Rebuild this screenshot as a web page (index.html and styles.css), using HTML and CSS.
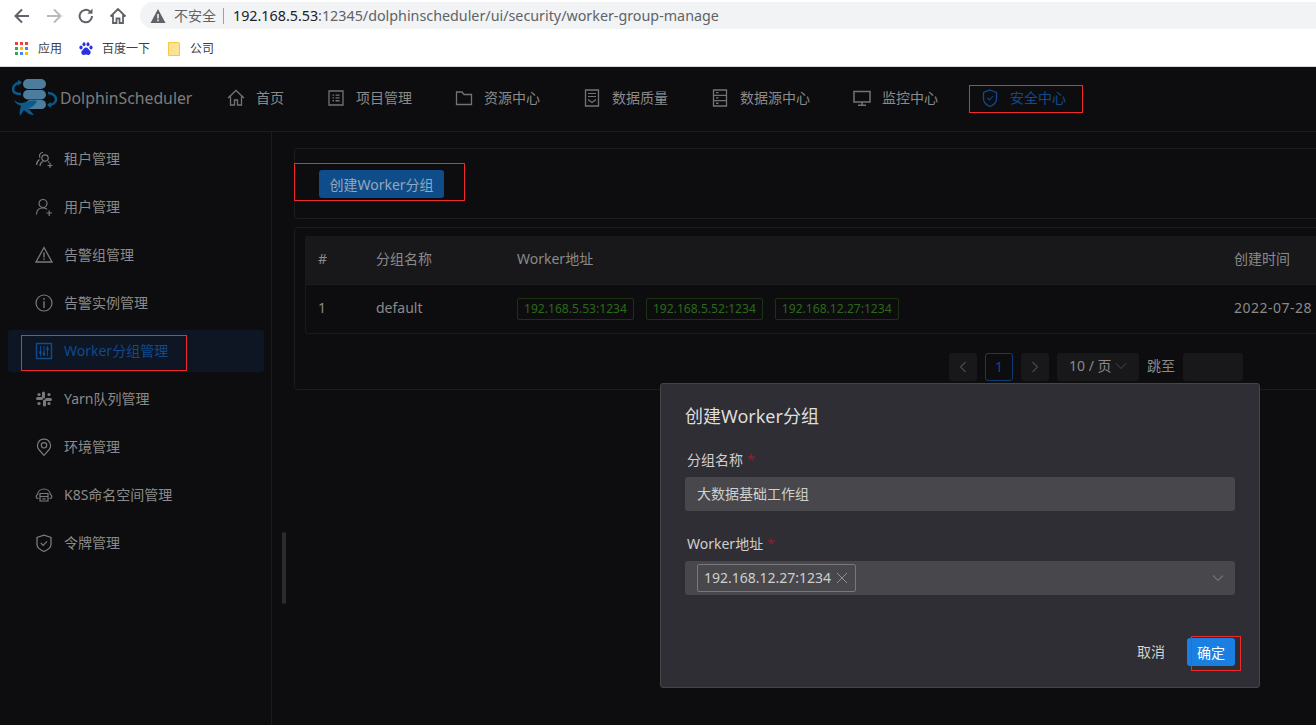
FILE: index.html
```html
<!DOCTYPE html>
<html lang="zh">
<head>
  <meta charset="UTF-8">
  <title>DolphinScheduler</title>
  <link rel="stylesheet" href="styles.css">
</head>
<body>

<div class="browser-bar">
  <svg class="tool-icon" viewBox="0 0 20 20"><path d="M17 10H4M10 3.5 3.5 10l6.5 6.5" fill="none" stroke="#5f6368" stroke-width="2"/></svg>
  <svg class="tool-icon" viewBox="0 0 20 20"><path d="M3 10h13M10 3.5l6.5 6.5-6.5 6.5" fill="none" stroke="#b8babd" stroke-width="2"/></svg>
  <svg class="tool-icon" viewBox="0 0 20 20"><path d="M16 10a6.2 6.2 0 1 1-1.9-4.4" fill="none" stroke="#5f6368" stroke-width="2"/><path d="M16.5 2.5v5.2h-5.2z" fill="#5f6368"/></svg>
  <svg class="tool-icon" viewBox="0 0 20 20"><path d="M2.5 10.5 10 3l7.5 7.5M5 9v8h3.5v-4.5h3V17H15V9" fill="none" stroke="#5f6368" stroke-width="1.8"/></svg>
  <div class="address">
    <svg class="warn-icon" viewBox="0 0 16 16"><path d="M8 1 15.500 15H.5z" fill="#5f6368"/><path d="M7.200 6h1.600v4.600H7.200zM7.200 11.600h1.600v1.600H7.200z" fill="#f1f3f4"/></svg>
    <span class="not-safe">不安全</span>
    <span class="url"><b>192.168.5.53</b>:12345/dolphinscheduler/ui/security/worker-group-manage</span>
  </div>
</div>

<div class="bookmarks">
  <div class="bookmark apps">
    <svg class="mark-icon" viewBox="0 0 13 13">
      <path d="M0 0h3v3H0z" fill="#ea4335"/><path d="M5 0h3v3H5z" fill="#ea4335"/><path d="M10 0h3v3h-3z" fill="#ea4335"/>
      <path d="M0 5h3v3H0z" fill="#34a853"/><path d="M5 5h3v3H5z" fill="#fbbc04"/><path d="M10 5h3v3h-3z" fill="#4285f4"/>
      <path d="M0 10h3v3H0z" fill="#34a853"/><path d="M5 10h3v3H5z" fill="#4285f4"/><path d="M10 10h3v3h-3z" fill="#fbbc04"/>
    </svg>
    应用
  </div>
  <div class="bookmark baidu">
    <svg class="mark-icon" viewBox="0 0 14 14" fill="#2932e1"><ellipse cx="2" cy="5.500" rx="1.600" ry="2"/><ellipse cx="5" cy="2.200" rx="1.500" ry="2"/><ellipse cx="9" cy="2.200" rx="1.500" ry="2"/><ellipse cx="12" cy="5.500" rx="1.600" ry="2"/><path d="M7 5.500c2 0 2.500 2 4 3.200 1.500 1.300.5 4.300-2 4.300-1 0-1.300-.4-2-.4s-1 .4-2 .4c-2.500 0-3.500-3-2-4.300C4.500 7.500 5 5.500 7 5.500z"/></svg>
    百度一下
  </div>
  <div class="bookmark folder">
    <svg class="mark-icon" viewBox="0 0 12 14"><path d="M.5.5h9.500a1.500 1.500 0 0 1 1.500 1.500v11.500H.5z" fill="#fde293" stroke="#f4c842"/></svg>
    公司
  </div>
</div>

<header class="topnav">
  <div class="logo">
    <svg class="logo-icon" viewBox="0 0 46 40">
      <rect x="11" y="1" width="23" height="10" rx="5" fill="#4d7d9c"/>
      <rect x="11" y="12" width="23" height="9.500" rx="4.700" fill="#4d7d9c"/>
      <rect x="14" y="22" width="20" height="9" rx="4.500" fill="#4d7d9c"/>
      <path d="M9 4.500C3 4.500 1 9 1 11c0 3 3 5 8 5" fill="none" stroke="#0d5a88" stroke-width="2.500"/>
      <path d="M6 1.500 10 4.500 6 7.500z" fill="#0d5a88"/>
      <path d="M36 15c6 0 8 4 8 6.500 0 3.500-3.500 5.500-8 5.500" fill="none" stroke="#0d5a88" stroke-width="2.500"/>
      <path d="M39 24l-4 3 4 3z" fill="#0d5a88"/>
      <path d="M2 22c3 2 5 3.500 8 3 5-1 9-3.500 15-2-2 4-5 7-9 7l6 7c-4 0-7-2-10-5l-4 6c-1-3 0-7 1-10-3-1-6-3-7-6z" fill="#0d5a88"/>
    </svg>
    <span class="logo-text">DolphinScheduler</span>
  </div>
  <nav class="menu">
    <div class="menu-item">
      <svg class="nav-icon" viewBox="0 0 18 18"><path d="M1 9 9 1.500 17 9M3.500 7.500V16h4v-5h3v5h4V7.500" fill="none" stroke="currentColor" stroke-width="1.300"/></svg>
      首页
    </div>
    <div class="menu-item">
      <svg class="nav-icon" viewBox="0 0 18 18"><path d="M2 2h14v14H2z" fill="none" stroke="currentColor" stroke-width="1.300"/><path d="M5.500 5.500h1.500v1.300H5.500zM8.500 5.500h4v1.300h-4zM5.500 8.300h1.500v1.300H5.500zM8.500 8.300h4v1.300h-4zM5.500 11.100h1.500v1.300H5.500zM8.500 11.100h4v1.300h-4z" fill="currentColor"/></svg>
      项目管理
    </div>
    <div class="menu-item">
      <svg class="nav-icon" viewBox="0 0 18 18"><path d="M1.500 3h5.500l2 2.500h7.500V15.500h-15z" fill="none" stroke="currentColor" stroke-width="1.300"/></svg>
      资源中心
    </div>
    <div class="menu-item">
      <svg class="nav-icon" viewBox="0 0 18 18"><path d="M2.500 1h13v16h-13z" fill="none" stroke="currentColor" stroke-width="1.300"/><path d="M5 4.500h8M5 7.500h8M5 10.500l4 3 4-3" fill="none" stroke="currentColor" stroke-width="1.200"/></svg>
      数据质量
    </div>
    <div class="menu-item">
      <svg class="nav-icon" viewBox="0 0 18 18"><path d="M2.500 1h13v16h-13zM2.500 6.300h13M2.500 11.600h13" fill="none" stroke="currentColor" stroke-width="1.300"/><path d="M5 3h2.500v1.300H5zM5 8.300h2.500v1.300H5zM5 13.600h2.500v1.300H5z" fill="currentColor"/></svg>
      数据源中心
    </div>
    <div class="menu-item">
      <svg class="nav-icon" viewBox="0 0 18 18"><path d="M1 2.500h16V13H1zM9 13v3M5 16.300h8" fill="none" stroke="currentColor" stroke-width="1.500"/></svg>
      监控中心
    </div>
    <div class="menu-item active">
      <svg class="nav-icon" viewBox="0 0 18 18"><path d="M9 1 15.500 3.500V10c0 3.500-3 6-6.500 7.500C5.500 16 2.500 13.500 2.500 10V3.500z" fill="none" stroke="currentColor" stroke-width="1.300"/><path d="m6.500 9 2 2 3.500-4" fill="none" stroke="currentColor" stroke-width="1.100"/></svg>
      安全中心
    </div>
  </nav>
</header>

<div class="layout">
  <aside class="sidebar">
    <div class="side-item">
      <svg class="side-icon" viewBox="0 0 18 18"><circle cx="10" cy="8" r="3.200" fill="none" stroke="currentColor" stroke-width="1.200"/><path d="M8 2.500a3.400 3.400 0 0 0-3 5.200M4.500 9.500C2.500 11 1.500 13 1.500 15M5 16c0-2.500 1.500-4 3-4.500M13 11.500c.5.300 1 .7 1.300 1.300M12.500 15.500h5M15 13v5" fill="none" stroke="currentColor" stroke-width="1.200"/></svg>
      租户管理
    </div>
    <div class="side-item">
      <svg class="side-icon" viewBox="0 0 18 18"><circle cx="8" cy="5.500" r="4" fill="none" stroke="currentColor" stroke-width="1.200"/><path d="M1.500 16.500c0-4 2.500-6.500 6.500-6.500 1.500 0 3 .4 4 1.200M11.500 15h5.500M14.200 12.500V18" fill="none" stroke="currentColor" stroke-width="1.200"/></svg>
      用户管理
    </div>
    <div class="side-item">
      <svg class="side-icon" viewBox="0 0 18 18"><path d="M9 1.500 17 16H1z" fill="none" stroke="currentColor" stroke-width="1.300"/><path d="M8.300 6.500h1.400v5H8.300zM8.300 12.500h1.400v1.500H8.300z" fill="currentColor"/></svg>
      告警组管理
    </div>
    <div class="side-item">
      <svg class="side-icon" viewBox="0 0 18 18"><circle cx="9" cy="9" r="8" fill="none" stroke="currentColor" stroke-width="1.200"/><path d="M8.300 4h1.400v1.700H8.300zM8.300 7.200h1.400V14H8.300z" fill="currentColor"/></svg>
      告警实例管理
    </div>
    <div class="side-item active">
      <svg class="side-icon" viewBox="0 0 18 18"><path d="M1.500 1.500h15v15h-15z" fill="none" stroke="currentColor" stroke-width="1.400"/><path d="M5.500 4v10M9 4v10M12.500 4v10" fill="none" stroke="currentColor" stroke-width="1"/><circle cx="5.500" cy="10.500" r="1.400" fill="currentColor"/><circle cx="9" cy="12" r="1.400" fill="currentColor"/><circle cx="12.500" cy="7" r="1.400" fill="currentColor"/></svg>
      Worker分组管理
    </div>
    <div class="side-item">
      <svg class="side-icon" viewBox="0 0 18 18" fill="currentColor"><rect x="7" y="1.500" width="3" height="7" rx="1.500"/><rect x="1" y="7" width="7" height="3" rx="1.500"/><rect x="10" y="8" width="7" height="3" rx="1.500"/><rect x="8" y="9.500" width="3" height="7" rx="1.500"/><circle cx="4" cy="4.500" r="1.600"/><circle cx="14" cy="4.500" r="1.600"/><circle cx="4" cy="13.500" r="1.600"/><circle cx="14" cy="13.500" r="1.600"/></svg>
      Yarn队列管理
    </div>
    <div class="side-item">
      <svg class="side-icon" viewBox="0 0 18 18"><path d="M9 17.300 3.800 11.500C1 8 3 1.200 9 1.200S17 8 14.200 11.500z" fill="none" stroke="currentColor" stroke-width="1.200"/><circle cx="9" cy="7.300" r="2.700" fill="none" stroke="currentColor" stroke-width="1.200"/></svg>
      环境管理
    </div>
    <div class="side-item">
      <svg class="side-icon" viewBox="0 0 18 18"><path d="M3.500 12.500H2.800C1 12.500.5 9.500 2.500 8.500 3 5 6 3 9 3s6 2 6.500 5.500c2 1 1.500 4-.3 4h-.7" fill="none" stroke="currentColor" stroke-width="1.200"/><path d="M5 7.500h8V15H5zM5 10.500h8M7.500 12.800h3" fill="none" stroke="currentColor" stroke-width="1.200"/></svg>
      K8S命名空间管理
    </div>
    <div class="side-item">
      <svg class="side-icon" viewBox="0 0 18 18"><path d="M9 1.200 16 3.500v7c0 3.500-3.500 5.500-7 7-3.500-1.500-7-3.500-7-7v-7z" fill="none" stroke="currentColor" stroke-width="1.300"/><path d="m5.800 9 2.300 2.300 4-4" fill="none" stroke="currentColor" stroke-width="1.200"/></svg>
      令牌管理
    </div>
  </aside>

  <main class="content">
    <section class="card toolbar-card">
      <button class="create-btn">创建Worker分组</button>
    </section>

    <section class="card table-card">
      <div class="table">
        <div class="table-row table-head">
          <div>#</div>
          <div>分组名称</div>
          <div>Worker地址</div>
          <div>创建时间</div>
        </div>
        <div class="table-row table-body">
          <div>1</div>
          <div>default</div>
          <div class="tags">
            <span class="tag">192.168.5.53:1234</span>
            <span class="tag">192.168.5.52:1234</span>
            <span class="tag">192.168.12.27:1234</span>
          </div>
          <div class="date">2022-07-28</div>
        </div>
      </div>

      <div class="pagination">
        <div class="page-btn"><svg class="page-arrow" viewBox="0 0 10 14"><path d="M7.500 2 2.500 7l5 5" fill="none" stroke="currentColor" stroke-width="1.100"/></svg></div>
        <div class="page-btn current">1</div>
        <div class="page-btn"><svg class="page-arrow" viewBox="0 0 10 14"><path d="m2.500 2 5 5-5 5" fill="none" stroke="currentColor" stroke-width="1.100"/></svg></div>
        <div class="page-size">10 / 页<svg class="page-chevron" viewBox="0 0 12 8"><path d="m1 1.500 5 5 5-5" fill="none" stroke="currentColor"/></svg></div>
        <span class="jump-label">跳至</span>
        <div class="jump-input"></div>
      </div>
    </section>
  </main>
</div>

<span class="scroll-thumb"></span>

<div class="dialog">
  <h3 class="dialog-title">创建Worker分组</h3>
  <label class="field-label">分组名称 <i>*</i></label>
  <div class="field-input">大数据基础工作组</div>
  <label class="field-label second">Worker地址 <i>*</i></label>
  <div class="field-input select">
    <span class="select-tag">192.168.12.27:1234
      <svg class="tag-close" viewBox="0 0 12 12"><path d="m1 1 10 10M11 1 1 11" stroke="currentColor" fill="none"/></svg>
    </span>
    <svg class="select-chevron" viewBox="0 0 12 8"><path d="m1 1.500 5 5 5-5" fill="none" stroke="currentColor" stroke-width="1.100"/></svg>
  </div>
  <div class="dialog-footer">
    <span class="cancel">取消</span>
    <button class="confirm">确定</button>
  </div>
</div>

<!-- red boxes drawn on the screenshot -->
<span class="redbox box-nav"></span>
<span class="redbox box-side"></span>
<span class="redbox box-create"></span>
<span class="redbox box-ok"></span>

</body>
</html>
```

FILE: styles.css
```css
* {
  box-sizing: border-box;
}
html, body {
  height: 100%;
}
body {
  position: relative;
  width: 1316px;
  height: 725px;
  margin: 0;
  overflow: hidden;
  display: flex;
  flex-direction: column;
  font-family: "Noto Sans", "Noto Sans CJK SC", sans-serif;
  font-size: 14px;
  line-height: 20px;
  background-color: #0d0d0f;
  color: #8a8a8a;
}

/* browser chrome */
.browser-bar {
  display: flex;
  align-items: center;
  height: 31px;
  padding-left: 12px;
  background-color: #fff;
}
.tool-icon {
  width: 20px;
  height: 20px;
  margin-right: 12px;
}
.address {
  display: flex;
  align-items: center;
  flex: 1;
  height: 27px;
  padding-left: 10px;
  background-color: #f1f3f4;
  border-radius: 14px 0 0 14px;
}
.warn-icon {
  width: 16px;
  height: 16px;
  margin-right: 8px;
}
.not-safe {
  padding-right: 7px;
  margin-right: 9px;
  border-right: 1px solid #9aa0a6;
  line-height: 16px;
  color: #5f6368;
}
.url {
  font-size: 14.3px;
  color: #5f6368;
}
.url b {
  font-weight: normal;
  color: #202124;
}
.bookmarks {
  display: flex;
  align-items: center;
  height: 36px;
  padding-left: 15px;
  background-color: #fff;
  border-bottom: 1px solid #d8d8d8;
  font-size: 12px;
  color: #3c4043;
}
.bookmark {
  display: flex;
  align-items: center;
}
.mark-icon {
  width: 13px;
  height: 13px;
}
.apps {
  gap: 10px;
  margin-right: 17px;
}
.baidu {
  gap: 9px;
  margin-right: 18px;
}
.baidu .mark-icon {
  width: 14px;
  height: 14px;
}
.folder {
  gap: 10px;
}
.folder .mark-icon {
  width: 12px;
  height: 14px;
}

/* header */
.topnav {
  display: flex;
  align-items: center;
  height: 65px;
  padding-bottom: 2px;
  border-bottom: 1px solid #1c1c1f;
  flex-shrink: 0;
}
.logo {
  display: flex;
  align-items: center;
  width: 227px;
  padding-left: 12px;
}
.logo-icon {
  width: 46px;
  height: 40px;
  margin-right: 2px;
}
.logo-text {
  font-size: 15.8px;
  color: #7d7d7d;
}
.menu {
  display: flex;
  gap: 43px;
}
.menu-item {
  display: flex;
  align-items: center;
  gap: 11px;
  color: #8a8a8a;
}
.nav-icon {
  width: 18px;
  height: 18px;
  color: #737373;
}
.menu-item.active,
.menu-item.active .nav-icon {
  color: #0f4a8f;
}

/* sidebar */
.layout {
  display: flex;
  flex: 1;
  min-height: 0;
}
.sidebar {
  flex-shrink: 0;
  width: 272px;
  padding: 6px 7px 0 8px;
  border-right: 1px solid #1c1c1f;
}
.side-item {
  display: flex;
  align-items: center;
  gap: 11px;
  height: 42px;
  margin-bottom: 6px;
  padding-left: 27px;
  padding-bottom: 1px;
  border-radius: 3px;
}
.side-icon {
  width: 18px;
  height: 18px;
  color: #7a7a7a;
}
.side-item.active {
  background-color: #0d1622;
  color: #0f4a8f;
}
.side-item.active .side-icon {
  color: #0f4a8f;
}
.scroll-thumb {
  position: absolute;
  left: 282px;
  top: 532px;
  width: 4px;
  height: 72px;
  background-color: #2b2b2d;
  border-radius: 2px;
}

/* main */
.content {
  width: 1060px;
  padding: 16px 0 0 22px;
  flex-shrink: 0;
}
.card {
  width: 1060px;
  border: 1px solid #1c1c1f;
  border-radius: 3px;
}
.toolbar-card {
  display: flex;
  align-items: center;
  height: 71px;
  margin-bottom: 8px;
  padding-left: 24px;
}
.create-btn {
  width: 125px;
  height: 28px;
  padding: 0;
  border: none;
  border-radius: 3px;
  background-color: #0f4c8a;
  color: #93a8bc;
  font-family: inherit;
  font-size: 14px;
}
.table-card {
  height: 163px;
  padding: 8px 10px 0;
}
.table {
  border: 1px solid #1a1a1d;
  border-top: none;
  border-radius: 3px;
}
.table-row {
  display: grid;
  grid-template-columns: 58px 141px 717px 1fr;
  align-items: center;
  padding-left: 12px;
  white-space: nowrap;
}
.table-head {
  height: 49px;
  padding-bottom: 2px;
  background-color: #18181b;
  border-bottom: 1px solid #1c1c1f;
}
.table-body {
  height: 48px;
  padding-bottom: 2px;
}
.date {
  letter-spacing: .5px;
}
.tags {
  display: flex;
  gap: 12px;
  padding-top: 2px;
}
.tag {
  display: flex;
  align-items: center;
  height: 22px;
  padding: 0 6px;
  border: 1px solid #1b3314;
  border-radius: 2px;
  font-size: 12.1px;
  color: #2a6a18;
}
.pagination {
  display: flex;
  align-items: center;
  justify-content: flex-end;
  gap: 8px;
  margin-top: 19px;
  padding-right: 100px;
}
.page-btn {
  display: flex;
  align-items: center;
  justify-content: center;
  width: 28px;
  height: 28px;
  background-color: #18181b;
  border-radius: 3px;
  color: #4a4a4c;
}
.page-btn.current {
  background-color: transparent;
  border: 1px solid #0c3c73;
  color: #0f4a8f;
}
.page-arrow {
  width: 10px;
  height: 14px;
}
.page-size {
  display: flex;
  align-items: center;
  justify-content: space-between;
  width: 82px;
  height: 28px;
  padding: 0 12px 2px;
  background-color: #18181b;
  border-radius: 3px;
}
.page-chevron {
  width: 12px;
  height: 8px;
  color: #4a4a4c;
}
.jump-label {
  margin-top: -2px;
}
.jump-input {
  width: 60px;
  height: 28px;
  background-color: #18181b;
  border-radius: 3px;
}

/* dialog */
.dialog {
  position: absolute;
  left: 660px;
  top: 383px;
  width: 600px;
  height: 305px;
  padding: 20px 24px 0 24px;
  background-color: #2f2e34;
  border: 1px solid #44444a;
  border-radius: 3px;
  color: #cfcfcf;
}
.dialog-title {
  margin: 0 0 21px;
  font-size: 18px;
  font-weight: normal;
  line-height: 24px;
  color: #dedede;
}
.field-label {
  display: block;
  height: 20px;
  margin-left: 2px;
  margin-bottom: 8px;
  line-height: 20px;
}
.field-label i {
  font-style: normal;
  font-size: 15px;
  color: #8a2030;
}
.field-label.second {
  margin-top: 22px;
}
.field-input {
  display: flex;
  align-items: center;
  height: 34px;
  padding-left: 12px;
  background-color: #47474c;
  border-radius: 3px;
}
.select {
  justify-content: space-between;
  padding-right: 11px;
}
.select-tag {
  display: flex;
  align-items: center;
  gap: 5px;
  height: 28px;
  padding: 0 7px 0 6px;
  border: 1px solid #77777c;
  border-radius: 2px;
}
.tag-close {
  width: 12px;
  height: 12px;
  color: #8f8f93;
}
.select-chevron {
  width: 12px;
  height: 8px;
  color: #717176;
}
.dialog-footer {
  display: flex;
  align-items: center;
  justify-content: flex-end;
  gap: 22px;
  margin-top: 43px;
}
.cancel {
  color: #d2d2d2;
}
.confirm {
  width: 48px;
  height: 28px;
  border: none;
  border-radius: 3px;
  background-color: #1a7fe0;
  color: #fff;
  font-family: inherit;
  font-size: 14px;
}

/* annotations */
.redbox {
  position: absolute;
  border: 1px solid #f02a2a;
}
.box-nav {
  left: 969px;
  top: 85px;
  width: 114px;
  height: 28px;
}
.box-side {
  left: 21px;
  top: 335px;
  width: 166px;
  height: 36px;
}
.box-create {
  left: 294px;
  top: 163px;
  width: 171px;
  height: 38px;
}
.box-ok {
  left: 1191px;
  top: 636px;
  width: 50px;
  height: 35px;
}
```
